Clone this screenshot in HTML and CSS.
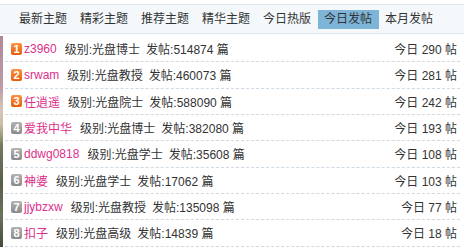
FILE: index.html
```html
<!DOCTYPE html>
<html lang="zh">
<head>
<meta charset="utf-8">
<link rel="stylesheet" href="styles.css">
</head>
<body>
<div class="tabs">
  <span class="tab">最新主题</span>
  <span class="tab">精彩主题</span>
  <span class="tab">推荐主题</span>
  <span class="tab">精华主题</span>
  <span class="tab">今日热版</span>
  <span class="tab active">今日发帖</span>
  <span class="tab">本月发帖</span>
</div>
<div class="body">
  <div class="strip"></div>
  <ul class="list">
    <li class="row"><span class="rank hot">1</span><a class="user">z3960</a><span class="info">级别:光盘博士</span><span class="info">发帖:514874 篇</span><span class="today">今日 290 帖</span></li>
    <li class="row"><span class="rank hot">2</span><a class="user">srwam</a><span class="info">级别:光盘教授</span><span class="info">发帖:460073 篇</span><span class="today">今日 281 帖</span></li>
    <li class="row"><span class="rank hot">3</span><a class="user">任逍遥</a><span class="info">级别:光盘院士</span><span class="info">发帖:588090 篇</span><span class="today">今日 242 帖</span></li>
    <li class="row"><span class="rank">4</span><a class="user">爱我中华</a><span class="info">级别:光盘博士</span><span class="info">发帖:382080 篇</span><span class="today">今日 193 帖</span></li>
    <li class="row"><span class="rank">5</span><a class="user">ddwg0818</a><span class="info">级别:光盘学士</span><span class="info">发帖:35608 篇</span><span class="today">今日 108 帖</span></li>
    <li class="row"><span class="rank">6</span><a class="user">神婆</a><span class="info">级别:光盘学士</span><span class="info">发帖:17062 篇</span><span class="today">今日 103 帖</span></li>
    <li class="row"><span class="rank">7</span><a class="user">jjybzxw</a><span class="info">级别:光盘教授</span><span class="info">发帖:135098 篇</span><span class="today">今日 77 帖</span></li>
    <li class="row"><span class="rank">8</span><a class="user">扣子</a><span class="info">级别:光盘高级</span><span class="info">发帖:14839 篇</span><span class="today">今日 18 帖</span></li>
  </ul>
</div>
</body>
</html>
```
FILE: styles.css
```css
html, body {
  margin: 0;
  padding: 0;
  background: #fff;
}
body {
  font-family: "Liberation Sans", "Noto Sans CJK SC", sans-serif;
  font-size: 12px;
  color: #333;
}
.tabs {
  margin-top: 4px;
  height: 28px;
  border-top: 1px solid #dfe6ec;
  border-bottom: 1px solid #dfe6ec;
  background: #f4f8fb;
  display: flex;
  align-items: center;
  padding-left: 12.5px;
}
.tab {
  padding: 0 6.5px;
  line-height: 19px;
  height: 19px;
  color: #333;
  white-space: nowrap;
}
.tab.active {
  background: #7db4d7;
}
.body {
  display: flex;
  margin-top: 2px;
}
.strip {
  width: 3px;
  background: linear-gradient(to bottom, #b0889a 0%, #bf9ca8 25%, #d6c6b8 35%, #c9bea2 42%, #727a5e 52%, #566048 70%, #6b7358 85%, #434d38 100%);
}
.list {
  flex: 1;
  list-style: none;
  margin: 0 4px 0 2px;
  padding: 0;
}
.row {
  display: flex;
  align-items: center;
  height: 25.33px;
  border-bottom: 1px dashed #cdd9e3;
  padding: 0 3px 0 6px;
  white-space: nowrap;
}
.rank {
  width: 11px;
  height: 12px;
  border-radius: 2px;
  background: linear-gradient(to bottom, #b3b3b3, #8a8a8a);
  color: #fff;
  font-size: 11px;
  font-weight: bold;
  line-height: 12px;
  text-align: center;
  margin-right: 2px;
}
.rank.hot {
  background: linear-gradient(to bottom, #fb9444, #e65c0a);
}
.user {
  color: #dc2f8b;
  margin-right: 8px;
}
.info {
  margin-right: 6px;
}
.today {
  margin-left: auto;
  margin-right: 0;
}
```
